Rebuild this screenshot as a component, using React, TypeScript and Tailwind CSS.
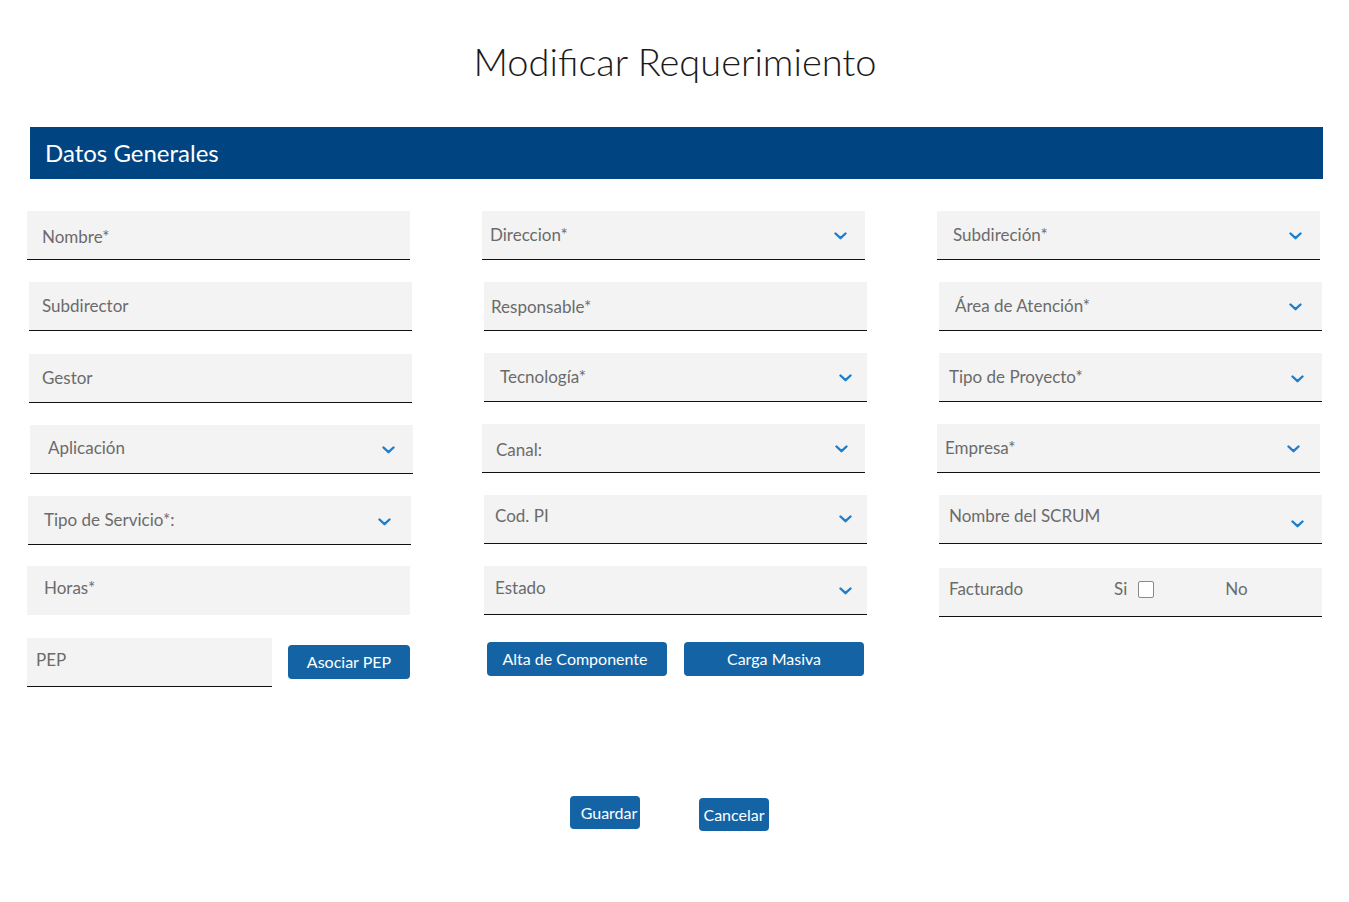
import React from "react";

const Chevron = ({ cls }: { cls: string }) => (
  <svg
    width="13"
    height="8"
    viewBox="0 0 13 8"
    className={cls}
    fill="none"
    stroke="#1b7fd1"
    strokeWidth="2.4"
    strokeLinecap="round"
    strokeLinejoin="round"
  >
    <path d="M1.5 1.5 L6.5 6.2 L11.5 1.5" />
  </svg>
);

type F = {
  label: string;
  wrap: string;
  inner: string;
  chev?: string;
  border?: boolean;
};

const Field = ({ f }: { f: F }) => (
  <div
    className={`${f.wrap} h-[49px] bg-[#f3f3f3] ${
      f.border === false ? "" : "border-b border-[#111]"
    } flex items-start`}
  >
    <div className={`flex items-start w-full ${f.inner}`}>
      <span className="text-[17px] leading-[22px] text-[#6b6b6b]">{f.label}</span>
      {f.chev && <Chevron cls={`ml-auto ${f.chev}`} />}
    </div>
  </div>
);

const col1: F[] = [
  { label: "Nombre*", wrap: "ml-0 mt-0", inner: "pl-[15px] pt-[15px]" },
  { label: "Subdirector", wrap: "ml-[2px] mt-[22px]", inner: "pl-[13px] pt-[13px]" },
  { label: "Gestor", wrap: "ml-[2px] mt-[23px]", inner: "pl-[13px] pt-[13px]" },
  {
    label: "Aplicación",
    wrap: "ml-[3px] mt-[22px]",
    inner: "pl-[18px] pt-[12px]",
    chev: "mr-[18px] mt-[9px]",
  },
  {
    label: "Tipo de Servicio*:",
    wrap: "ml-[1px] mt-[22px]",
    inner: "pl-[16px] pt-[13px]",
    chev: "mr-[20px] mt-[9px]",
  },
  { label: "Horas*", wrap: "ml-0 mt-[21px]", inner: "pl-[17px] pt-[11px]", border: false },
];

const col2: F[] = [
  { label: "Direccion*", wrap: "ml-0 mt-0", inner: "pl-[8px] pt-[13px]", chev: "mr-[18px] mt-[8px]" },
  { label: "Responsable*", wrap: "ml-[2px] mt-[22px]", inner: "pl-[7px] pt-[14px]" },
  {
    label: "Tecnología*",
    wrap: "ml-[2px] mt-[22px]",
    inner: "pl-[16px] pt-[13px]",
    chev: "mr-[15px] mt-[8px]",
  },
  { label: "Canal:", wrap: "ml-0 mt-[22px]", inner: "pl-[14px] pt-[15px]", chev: "mr-[17px] mt-[6px]" },
  { label: "Cod. PI", wrap: "ml-[2px] mt-[22px]", inner: "pl-[11px] pt-[10px]", chev: "mr-[15px] mt-[10px]" },
  { label: "Estado", wrap: "ml-[2px] mt-[22px]", inner: "pl-[11px] pt-[11px]", chev: "mr-[15px] mt-[10px]" },
];

const col3: F[] = [
  { label: "Subdireción*", wrap: "ml-0 mt-0", inner: "pl-[16px] pt-[13px]", chev: "mr-[18px] mt-[8px]" },
  {
    label: "Área de Atención*",
    wrap: "ml-[2px] mt-[22px]",
    inner: "pl-[16px] pt-[13px]",
    chev: "mr-[20px] mt-[8px]",
  },
  {
    label: "Tipo de Proyecto*",
    wrap: "ml-[2px] mt-[22px]",
    inner: "pl-[10px] pt-[13px]",
    chev: "mr-[18px] mt-[9px]",
  },
  { label: "Empresa*", wrap: "ml-0 mt-[22px]", inner: "pl-[8px] pt-[13px]", chev: "mr-[20px] mt-[8px]" },
  {
    label: "Nombre del SCRUM",
    wrap: "ml-[2px] mt-[22px]",
    inner: "pl-[10px] pt-[10px]",
    chev: "mr-[18px] mt-[15px]",
  },
];

const Btn = ({ children, cls }: { children: React.ReactNode; cls: string }) => (
  <button
    className={`${cls} bg-[#1464a5] text-white rounded-[4px] flex items-center justify-center`}
  >
    {children}
  </button>
);

export default function App() {
  return (
    <div
      className="w-[1349px] min-h-[902px] bg-white"
      style={{ fontFamily: "Lato, 'Open Sans', sans-serif" }}
    >
      <div className="pt-[38px] text-center">
        <h1 className="text-[38px] leading-[46px] font-light text-[#1a1a1a] pl-[1px]">
          Modificar Requerimiento
        </h1>
      </div>
      <div className="mt-[43px] ml-[30px] mr-[26px] h-[52px] bg-[#004481] flex items-center pl-[15px]">
        <span className="text-[24px] text-white font-normal leading-[30px]">Datos Generales</span>
      </div>

      <div className="flex pl-[27px] pt-[32px] gap-[72px]">
        <div className="w-[383px] flex flex-col items-start">
          {col1.map((f) => (
            <Field key={f.label} f={{ ...f, wrap: `${f.wrap} w-[383px]` }} />
          ))}
          <div className="mt-[23px] flex items-start">
            <div className="w-[245px] h-[49px] bg-[#f3f3f3] border-b border-[#111] pl-[9px] pt-[10px]">
              <span className="text-[17px] leading-[22px] text-[#6b6b6b]">PEP</span>
            </div>
            <Btn cls="ml-[16px] mt-[7px] w-[122px] h-[34px] text-[16px]">Asociar PEP</Btn>
          </div>
        </div>

        <div className="w-[383px] flex flex-col items-start">
          {col2.map((f) => (
            <Field key={f.label} f={{ ...f, wrap: `${f.wrap} w-[383px]` }} />
          ))}
          <div className="mt-[27px] ml-[5px] flex gap-[17px]">
            <Btn cls="w-[180px] h-[34px] text-[16px] pr-[4px]">Alta de Componente</Btn>
            <Btn cls="w-[180px] h-[34px] text-[16px]">Carga Masiva</Btn>
          </div>
        </div>

        <div className="w-[385px] flex flex-col items-start">
          {col3.map((f) => (
            <Field key={f.label} f={{ ...f, wrap: `${f.wrap} w-[383px]` }} />
          ))}
          <div className="ml-[2px] mt-[24px] w-[383px] h-[49px] bg-[#f3f3f3] border-b border-[#111] flex items-start pt-[10px] pl-[10px]">
            <span className="text-[17px] leading-[22px] text-[#6b6b6b] w-[165px]">Facturado</span>
            <span className="text-[17px] leading-[22px] text-[#6b6b6b]">Si</span>
            <span className="ml-[11px] mt-[3px] w-[16px] h-[17px] border border-[#8a8a8a] rounded-[2px] bg-white" />
            <span className="ml-[71px] text-[17px] leading-[22px] text-[#6b6b6b]">No</span>
          </div>
        </div>
      </div>

      <div className="mt-[109px] flex justify-center gap-[59px] pr-[10px] items-start">
        <Btn cls="w-[70px] h-[33px] text-[16px] pl-[8px]">Guardar</Btn>
        <Btn cls="mt-[2px] w-[70px] h-[33px] text-[16px]">Cancelar</Btn>
      </div>
    </div>
  );
}
